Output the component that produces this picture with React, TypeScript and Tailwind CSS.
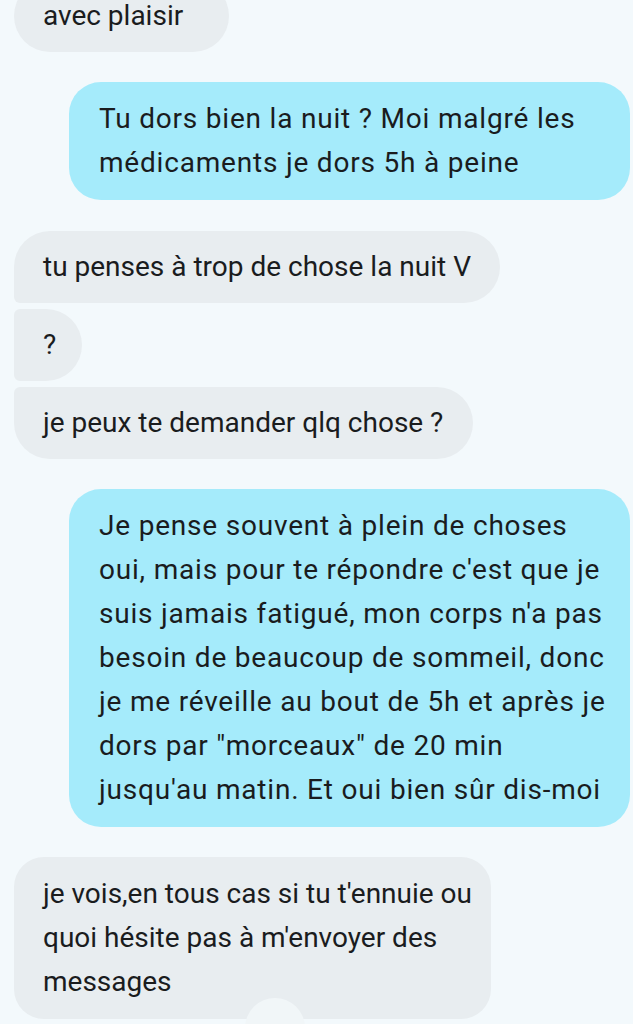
import React from 'react';

type Msg = {
  side: 'in' | 'out';
  lines: string[];
  corners: string;
  width?: string;
  gap?: string;
};

const messages: Msg[] = [
  {
    side: 'in',
    lines: ['avec plaisir'],
    corners: 'rounded-[36px]',
    width: 'w-[215px]',
    gap: 'mt-[-20px]',
  },
  {
    side: 'out',
    lines: ['Tu dors bien la nuit ? Moi malgré les', 'médicaments je dors 5h à peine'],
    corners: 'rounded-[32px]',
    gap: 'mt-[30px]',
  },
  {
    side: 'in',
    lines: ['tu penses à trop de chose la nuit V'],
    corners: 'rounded-[36px] rounded-bl-[6px]',
    width: 'w-[486px]',
    gap: 'mt-[31px]',
  },
  {
    side: 'in',
    lines: ['?'],
    corners: 'rounded-r-[36px] rounded-l-[6px]',
    width: 'w-[68px]',
    gap: 'mt-[6px]',
  },
  {
    side: 'in',
    lines: ['je peux te demander qlq chose ?'],
    corners: 'rounded-[36px] rounded-tl-[6px]',
    width: 'w-[459px]',
    gap: 'mt-[6px]',
  },
  {
    side: 'out',
    lines: [
      'Je pense souvent à plein de choses',
      "oui, mais pour te répondre c'est que je",
      "suis jamais fatigué, mon corps n'a pas",
      'besoin de beaucoup de sommeil, donc',
      'je me réveille au bout de 5h et après je',
      'dors par "morceaux" de 20 min',
      "jusqu'au matin. Et oui bien sûr dis-moi",
    ],
    corners: 'rounded-[32px]',
    gap: 'mt-[30px]',
  },
  {
    side: 'in',
    lines: [
      "je vois,en tous cas si tu t'ennuie ou",
      "quoi hésite pas à m'envoyer des",
      'messages',
    ],
    corners: 'rounded-[30px]',
    width: 'w-[477px]',
    gap: 'mt-[30px]',
  },
];

function Bubble({ msg }: { msg: Msg }) {
  const single = msg.lines.length === 1;
  const base =
    msg.side === 'out'
      ? 'ml-[69px] mr-[3px] bg-[#a5ebfb] pl-[30px] pr-[14px] tracking-[0.8px]'
      : 'ml-[14px] bg-[#e8edf0] pl-[29px] pr-[20px]';
  return (
    <div className={`${msg.gap ?? ''} flex ${msg.side === 'out' ? 'justify-end' : 'justify-start'}`}>
      <div
        className={`${base} ${msg.corners} ${msg.width ?? 'flex-1'} ${single ? 'py-[14px]' : 'py-[15px]'} text-[28px] leading-[44px] text-[#1a1c1e]`}
      >
        {msg.lines.map((line, i) => (
          <div key={i} className="whitespace-nowrap">
            {line}
          </div>
        ))}
      </div>
    </div>
  );
}

export default function App() {
  return (
    <div
      className="relative h-[1024px] w-[633px] overflow-hidden bg-[#f3f9fc]"
      style={{ fontFamily: 'Roboto, "Noto Sans", sans-serif' }}
    >
      <div className="flex flex-col">
        {messages.map((m, i) => (
          <Bubble key={i} msg={m} />
        ))}
      </div>
      <div className="absolute left-[245px] top-[998px] h-[60px] w-[60px] rounded-full bg-[#f1f6f8]" />
    </div>
  );
}
